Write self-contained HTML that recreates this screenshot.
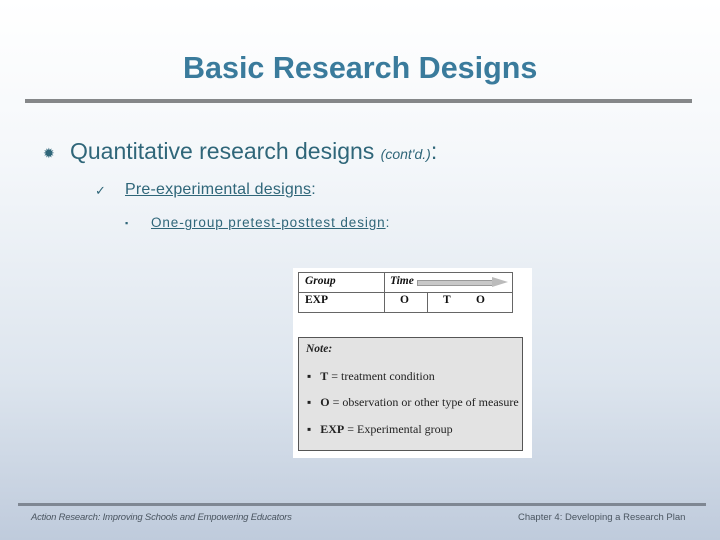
<!DOCTYPE html>
<html><head><style>
body{margin:0;width:720px;height:540px;overflow:hidden;background:linear-gradient(#ffffff 0%,#f4f7fa 30%,#dde5ee 70%,#bfcbdc 100%);font-family:"Liberation Sans",sans-serif;position:relative}
.a{position:absolute;white-space:nowrap}
</style></head><body>
<div class="a" style="left:183px;top:51px;font-size:30.5px;font-weight:bold;color:#3a7b9c;letter-spacing:0px">Basic Research Designs</div>
<div class="a" style="left:25px;top:99px;width:667px;height:4px;background:#858789"></div>
<div class="a" style="left:43px;top:145px;font-size:14px;color:#2f6679">✹</div>
<div class="a" style="left:70px;top:138px;font-size:23px;color:#2f6679;letter-spacing:0px">Quantitative research designs <span style="font-size:14px;font-style:italic">(cont'd.)</span>:</div>
<div class="a" style="left:95px;top:183px;font-size:13px;color:#2f6679">✓</div>
<div class="a" style="left:125px;top:181px;font-size:16px;color:#2f6679;letter-spacing:0.2px"><u>Pre-experimental designs</u>:</div>
<div class="a" style="left:125px;top:218px;font-size:9px;color:#2f6679">▪</div>
<div class="a" style="left:151px;top:215px;font-size:13.5px;color:#2f6679;letter-spacing:0.9px"><u>One-group pretest-posttest design</u>:</div>
<div class="a" style="left:293px;top:268px;width:239px;height:190px;background:#fff"></div>
<div class="a" style="left:298px;top:272px;width:213px;height:39px;border:1px solid #666;font-family:'Liberation Serif',serif;font-size:11.5px;font-weight:bold;color:#111">
 <div class="a" style="left:0;top:0;width:213px;height:19px;border-bottom:1px solid #666"></div>
 <div class="a" style="left:85px;top:0;width:1px;height:39px;background:#666"></div>
 <div class="a" style="left:128px;top:19px;width:1px;height:20px;background:#666"></div>
 <div class="a" style="left:6px;top:2px;font-style:italic">Group</div>
 <div class="a" style="left:91px;top:2px;font-style:italic">Time</div>
 <div class="a" style="left:118px;top:7px;width:75px;height:4px;background:#c8c8c8;border:1px solid #999"></div>
 <div class="a" style="left:193px;top:4px;width:0;height:0;border-top:5px solid transparent;border-bottom:5px solid transparent;border-left:16px solid #bbb"></div>
 <div class="a" style="left:6px;top:21px">EXP</div>
 <div class="a" style="left:101px;top:21px">O</div>
 <div class="a" style="left:144px;top:21px">T</div>
 <div class="a" style="left:177px;top:21px">O</div>
</div>
<div class="a" style="left:298px;top:337px;width:223px;height:112px;background:#e3e3e3;border:1px solid #555;font-family:'Liberation Serif',serif;font-size:12px;color:#222;letter-spacing:0px">
 <div class="a" style="left:7px;top:5px;font-weight:bold;font-style:italic;font-size:11.5px">Note:</div>
 <div class="a" style="left:8px;top:31px">▪ &nbsp;&nbsp;<b>T</b> = treatment condition</div>
 <div class="a" style="left:8px;top:57px">▪ &nbsp;&nbsp;<b>O</b> = observation or other type of measure</div>
 <div class="a" style="left:8px;top:84px">▪ &nbsp;&nbsp;<b>EXP</b> = Experimental group</div>
</div>
<div class="a" style="left:18px;top:503px;width:688px;height:3px;background:#7f8793"></div>
<div class="a" style="left:31px;top:512px;font-size:9.5px;font-style:italic;color:#4a5560;letter-spacing:-0.2px">Action Research: Improving Schools and Empowering Educators</div>
<div class="a" style="left:518px;top:512px;font-size:9.5px;color:#4a5560;letter-spacing:0px">Chapter 4: Developing a Research Plan</div>
</body></html>
